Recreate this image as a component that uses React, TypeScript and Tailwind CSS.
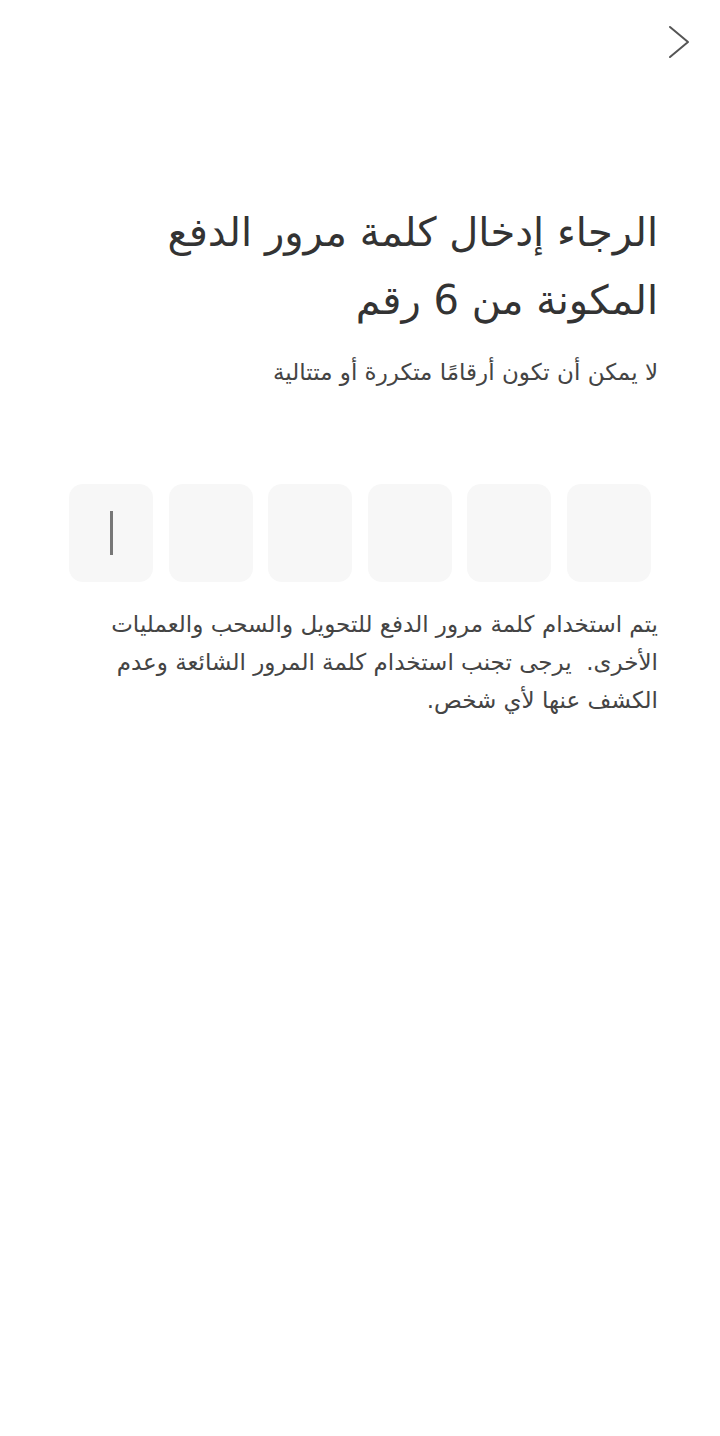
export default function App() {
  return (
    <div
      dir="rtl"
      className="min-h-screen w-full bg-white text-[#333333]"
      style={{ fontFamily: '"DejaVu Sans", "Noto Sans", sans-serif' }}
    >
      <div className="flex h-[84px] items-start justify-start pr-[28px] pt-[24px]">
        <svg width="28" height="36" viewBox="0 0 28 36" fill="none">
          <path d="M6 3 L24 18 L6 33" stroke="#555555" strokeWidth="2" strokeLinecap="round" strokeLinejoin="round" />
        </svg>
      </div>

      <div className="pl-[140px] pr-[62px] pt-[114px]">
        <h1 className="text-[40px] leading-[68px] font-normal text-[#333333]">
          الرجاء إدخال كلمة مرور الدفع المكونة من 6 رقم
        </h1>
      </div>
      <p className="mt-[22px] pr-[62px] text-[23px] leading-[32px] text-[#444444]">
        لا يمكن أن تكون أرقامًا متكررة أو متتالية
      </p>

      <div dir="ltr" className="mt-[96px] flex justify-between px-[69px]">
        {[0, 1, 2, 3, 4, 5].map((i) => (
          <div key={i} className="flex h-[98px] w-[84px] items-center justify-center rounded-[14px] bg-[#f7f7f7]">
            {i === 0 && <div className="h-[44px] w-[3px] bg-[#777777]" />}
          </div>
        ))}
      </div>

      <p className="mt-[23px] pl-[100px] pr-[62px] text-[23px] leading-[38px] text-[#444444]">
        يتم استخدام كلمة مرور الدفع للتحويل والسحب والعمليات الأخرى.&nbsp; يرجى تجنب استخدام كلمة المرور الشائعة وعدم الكشف عنها لأي شخص.
      </p>
    </div>
  );
}
